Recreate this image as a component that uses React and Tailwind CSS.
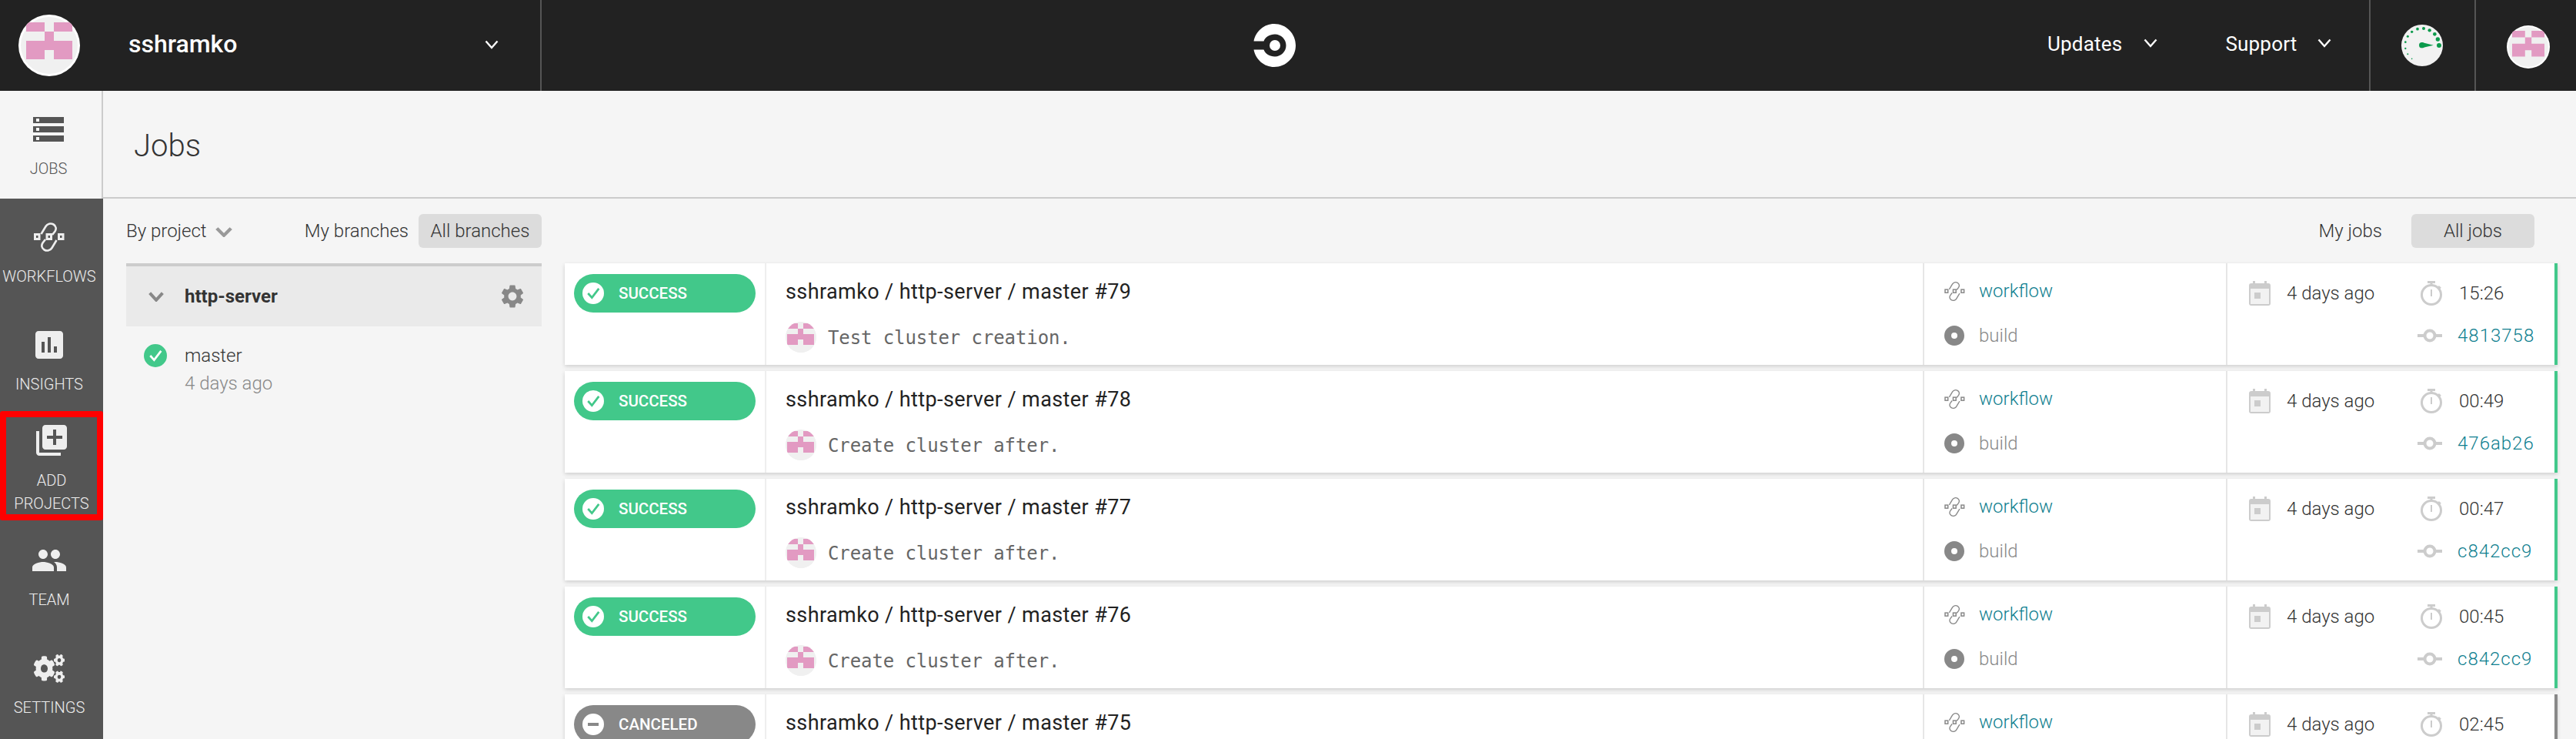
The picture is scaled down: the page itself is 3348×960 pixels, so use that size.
import { MdStorage, MdAssessment, MdLibraryAdd, MdPeople, MdSettings } from 'react-icons/md';
import { FaCogs } from 'react-icons/fa';

const jobs = [
  { n: 79, msg: 'Test cluster creation.', time: '15:26', sha: '4813758' },
  { n: 78, msg: 'Create cluster after.', time: '00:49', sha: '476ab26' },
  { n: 77, msg: 'Create cluster after.', time: '00:47', sha: 'c842cc9' },
  { n: 76, msg: 'Create cluster after.', time: '00:45', sha: 'c842cc9' },
  // only the top line of this row is on screen
  { n: 75, time: '02:45', canceled: true },
];

function Avatar({ className, ring }) {
  return (
    <svg viewBox="0 0 80 80" className={className}>
      <defs>
        <clipPath id="av">
          <circle cx="40" cy="40" r="40" />
        </clipPath>
      </defs>
      <g clipPath="url(#av)">
        <rect width="80" height="80" fill={ring ? '#fff' : '#f0f0f0'} />
        <circle cx="40" cy="40" r={ring ? 37 : 40} fill="#f0f0f0" />
        <path
          d="M10 10h24v12H10zM46 10h24v12H46zM34 22h12v12H34zM10 34h60v24H46V46H34v12H10z"
          fill="#e29ac2"
          transform={ring ? undefined : 'translate(-7.670 -7.670) scale(1.167)'}
        />
      </g>
    </svg>
  );
}

function Chevron({ className, stroke = '#fff', width = 2.4 }) {
  return (
    <svg viewBox="0 0 18 12" className={className} fill="none" stroke={stroke} strokeWidth={width} preserveAspectRatio="none">
      <path d="M1.500 1.500 9 10l7.500-8.500" />
    </svg>
  );
}

function WorkflowIcon({ className, color = '#eee', width = 2.6, box = 3 }) {
  return (
    <svg viewBox="0 0 40 38" className={className} fill="none" stroke={color} strokeWidth={width}>
      <path d="M9.500 15 15.500 5C17.500 1.500 22 .5 25.500 2.500 29 4.500 29.500 8.500 27.500 11.500L24 16" />
      <path d="M29.500 23 23.500 33C21.500 36.500 17 37.500 13.500 35.500 10 33.500 9.500 29.500 11.500 26.500L15 22" />
      <rect x="1.500" y="15.500" width="5.500" height="6" strokeWidth={box} />
      <rect x="17" y="15.500" width="5.500" height="6" strokeWidth={box} />
      <rect x="32.500" y="15.500" width="5.500" height="6" strokeWidth={box} />
    </svg>
  );
}

function Calendar() {
  return (
    <svg viewBox="0 0 28 32" className="w-[28px] h-[32px]">
      <path d="M5 0h3v3h12V0h3v3h2a3 3 0 0 1 3 3v23a3 3 0 0 1-3 3H3a3 3 0 0 1-3-3V6a3 3 0 0 1 3-3h2z" fill="#ccc" />
      <rect x="2" y="10" width="24" height="20" fill="#f2f2f2" />
      <rect x="7" y="15" width="8" height="8" fill="#ccc" />
    </svg>
  );
}

function Stopwatch() {
  return (
    <svg viewBox="0 0 28 32" className="w-[28px] h-[32px]" fill="none" stroke="#ccc">
      <circle cx="14" cy="18" r="12.500" strokeWidth="3" />
      <path d="M9 1.500h10" strokeWidth="3" />
      <path d="M14 3v3" strokeWidth="3" />
      <path d="M14 11v9" strokeWidth="2" />
      <path d="m23 7 3 2.500" strokeWidth="2.500" />
    </svg>
  );
}

function CommitIcon() {
  return (
    <svg viewBox="0 0 32 18" className="w-[32px] h-[18px]" fill="none" stroke="#ccc" strokeWidth="4">
      <circle cx="16" cy="9" r="6.500" />
      <path d="M0 9h9M23 9h9" />
    </svg>
  );
}

const gaugeDots = [
  [210, 114, 9], [205, 90, 8], [193, 70, 7], [173, 55, 6.5], [150, 48, 6], [126, 50, 5.5],
  [104, 61, 5], [88, 79, 4.5], [79, 101, 4], [79, 126, 3.5], [88, 148, 3], [104, 166, 2.5],
];

function Gauge() {
  return (
    <svg viewBox="63 33 162 162" className="w-[54px] h-[54px]">
      <circle cx="144" cy="114" r="81" fill="#f2f2f2" />
      {gaugeDots.map(([x, y, r]) => (
        <circle key={`${x}-${y}`} cx={x} cy={y} r={r} fill="#0c9a4c" />
      ))}
      <circle cx="143" cy="113" r="11" fill="#0c9a4c" />
      <path d="M143 102 188 113 143 124z" fill="#0c9a4c" />
    </svg>
  );
}

function NavItem({ icon, label }) {
  return (
    <div className="h-[140px] flex flex-col items-center pt-[30px] pr-[6px] text-[#eee]">
      <div className="h-[40px] flex items-center justify-center">{icon}</div>
      <span className="mt-[19px] text-[20px] leading-[24px] font-light whitespace-nowrap">{label}</span>
    </div>
  );
}

function Sidebar() {
  return (
    <div className="w-[134px] shrink-0 bg-[#555] flex flex-col">
      <div className="h-[140px] bg-[#f5f5f5] border-r-2 border-[#ccc] flex flex-col items-center pt-[30px] pr-[6px] text-[#555]">
        <div className="h-[40px] flex items-center justify-center">
          <MdStorage size={48} color="#555" />
        </div>
        <span className="mt-[19px] text-[20px] leading-[24px] font-light">JOBS</span>
      </div>
      <NavItem icon={<WorkflowIcon className="w-[40px] h-[38px]" />} label="WORKFLOWS" />
      <NavItem icon={<MdAssessment size={48} />} label="INSIGHTS" />
      <div className="h-[142px] -mt-[4px] mb-[2px] border-[8px] border-[#f00] rounded-[3px] flex flex-col items-center pt-[8px] text-[#eee]">
        <div className="h-[44px] flex items-center justify-center">
          <MdLibraryAdd size={48} />
        </div>
        <span className="mt-[15px] text-[20px] leading-[30px] font-light">ADD</span>
        <span className="text-[20px] leading-[30px] font-light">PROJECTS</span>
      </div>
      <NavItem icon={<MdPeople size={48} />} label="TEAM" />
      <NavItem icon={<FaCogs preserveAspectRatio="none" className="w-[40px] h-[37px]" />} label="SETTINGS" />
    </div>
  );
}

function TopBar() {
  return (
    <div className="h-[118px] shrink-0 bg-[#222] flex items-center text-white">
      <div className="w-[704px] h-full shrink-0 border-r-2 border-[#555] flex items-center pl-[24px]">
        <Avatar ring className="w-[80px] h-[80px]" />
        <span className="ml-[63px] -mt-[4px] text-[32px] font-medium">sshramko</span>
        <Chevron className="w-[18px] h-[12px] ml-[322px] -mt-[2px]" />
      </div>
      <div className="flex-1 h-full flex items-center">
        <svg viewBox="0 0 56 56" className="w-[56px] h-[56px] ml-[924px]">
          <circle cx="29" cy="28" r="7" fill="#fff" />
          <path d="M1.500 22.500C4 9.500 15 0 28 0c15.500 0 28 12.500 28 28S43.500 56 28 56C15 56 4 46.500 1.500 33.500h13C16.500 39 22 42.500 29 42.500c8 0 14.500-6.500 14.500-14.500S37 13.500 29 13.500C22 13.500 16.500 17 14.500 22.500z" fill="#fff" />
        </svg>
        <span className="ml-[977px] -mt-[3px] text-[26px] tracking-[0.2px]">Updates</span>
        <Chevron className="w-[18px] h-[12px] ml-[28px] -mt-[6px]" />
        <span className="ml-[88px] -mt-[3px] text-[26px] tracking-[0.2px]">Support</span>
        <Chevron className="w-[18px] h-[12px] ml-[26px] -mt-[6px]" />
      </div>
      <div className="w-[137px] h-full shrink-0 border-l-2 border-[#555] flex items-center justify-center pr-[2px] -ml-[1px]">
        <Gauge />
      </div>
      <div className="w-[132px] h-full shrink-0 border-l-2 border-[#555] pl-[40px] flex items-center">
        <Avatar ring className="w-[56px] h-[56px] mt-[4px]" />
      </div>
    </div>
  );
}

function JobRow({ job }) {
  const canceled = job.canceled;
  return (
    <div className={`h-[132px] shrink-0 flex bg-white border-r-4 shadow-[0_2px_5px_rgba(0,0,0,0.16)] ${canceled ? 'border-[#888]' : 'border-[#42c88a]'}`}>
      <div className="w-[262px] shrink-0 border-r-2 border-[#eee] pl-[12px] pt-[14px]">
        <div className={`w-[236px] h-[50px] rounded-full flex items-center pl-[11px] ${canceled ? 'bg-[#888]' : 'bg-[#42c88a]'}`}>
          <span className="w-[28px] h-[28px] rounded-full bg-white flex items-center justify-center">
            {canceled ? (
              <span className="w-[14px] h-[4px] bg-[#888]" />
            ) : (
              <svg viewBox="0 0 16 14" className="w-[18px] h-[16px]" fill="none" stroke="#42c88a" strokeWidth="2.400">
                <path d="m2 7 4.500 5L14.500 1.500" />
              </svg>
            )}
          </span>
          <span className="ml-[19px] text-[20.500px] font-medium text-white">{canceled ? 'CANCELED' : 'SUCCESS'}</span>
        </div>
      </div>
      <div className="w-[1503px] shrink-0 pl-[25px] pt-[20px]">
        <div className="h-[34px] flex items-center text-[27px] tracking-[0.4px] text-[#222] whitespace-nowrap">sshramko / http-server / master #{job.n}</div>
        {job.msg && (
          <div className="mt-[22px] h-[40px] flex items-center">
            <Avatar className="w-[40px] h-[40px]" />
            <span className="ml-[15px] mt-[2px] text-[24px] text-[#666] font-['DejaVu_Sans_Mono',monospace] tracking-[-0.1px]">{job.msg}</span>
          </div>
        )}
      </div>
      <div className="w-[396px] shrink-0 border-l-2 border-r-2 border-[#e6e6e6] pl-[26px] pt-[21px]">
        <div className="h-[30px] flex items-center">
          <WorkflowIcon className="w-[27px] h-[27px]" color="#888" width={2} box={2.200} />
          <span className="ml-[18px] -mt-[1px] text-[24px] font-light text-[#0f7f90]">workflow</span>
        </div>
        {!canceled && (
          <div className="mt-[28px] h-[30px] flex items-center">
            <span className="w-[26px] h-[26px] rounded-full border-[9px] border-[#888] bg-white" />
            <span className="ml-[19px] -mt-[1px] text-[24px] font-light text-[#888]">build</span>
          </div>
        )}
      </div>
      <div className="flex-1 pt-[23px] pl-[28px] flex">
        <div className="w-[219px] shrink-0 flex items-start">
          <Calendar />
          <span className="ml-[21px] text-[24px] leading-[32px] font-light text-[#333] whitespace-nowrap">4 days ago</span>
        </div>
        <div className="flex-1">
          <div className="flex items-center pl-[4px] h-[32px]">
            <Stopwatch />
            <span className="ml-[22px] text-[24px] font-light text-[#333]">{job.time}</span>
          </div>
          {job.sha && (
            <div className="flex items-center mt-[23px] h-[32px]">
              <CommitIcon />
              <span className="ml-[20px] text-[24px] font-light tracking-[1px] text-[#0f7f90]">{job.sha}</span>
            </div>
          )}
        </div>
      </div>
    </div>
  );
}

export default function App() {
  return (
    <div className="w-[3348px] h-[960px] overflow-hidden flex flex-col bg-[#f5f5f5] font-['Roboto',sans-serif]">
      <TopBar />
      <div className="flex-1 flex min-h-0">
        <Sidebar />
        <div className="flex-1 flex flex-col min-w-0">
          <div className="h-[140px] shrink-0 border-b-2 border-[#ccc] flex items-center pl-[40px] pt-[6px]">
            <h1 className="text-[40px] font-light text-[#333]">Jobs</h1>
          </div>
          <div className="flex-1 flex pl-[30px] pr-[24px] gap-[30px] min-h-0">
            <div className="w-[540px] shrink-0 pt-[20px]">
              <div className="h-[44px] flex items-center text-[24px] font-light text-[#333]">
                <span>By project</span>
                <Chevron className="w-[22px] h-[13px] ml-[11px] mt-[3px]" stroke="#999" width={3.600} />
                <span className="ml-[auto]">My branches</span>
                <span className="ml-[13px] w-[160px] h-[44px] rounded-[6px] bg-[#dcdcdc] flex items-center justify-center">All branches</span>
              </div>
              <div className="mt-[20px] h-[82px] border-t-4 border-[#ccc] bg-[#eaeaea] flex items-center pl-[29px] pr-[20px]">
                <Chevron className="w-[20px] h-[13px]" stroke="#888" width={3.600} />
                <span className="ml-[27px] text-[24px] font-bold text-[#333]">http-server</span>
                <MdSettings size={36} color="#888" className="ml-auto" />
              </div>
              <div className="mt-[23px] flex pl-[23px]">
                <span className="w-[30px] h-[30px] rounded-full bg-[#42c88a] flex items-center justify-center">
                  <svg viewBox="0 0 16 14" className="w-[18px] h-[16px]" fill="none" stroke="#fff" strokeWidth="2.400">
                    <path d="m2 7 4.500 5L14.500 1.500" />
                  </svg>
                </span>
                <div className="ml-[23px] text-[24px] font-light">
                  <div className="leading-[30px] text-[#333]">master</div>
                  <div className="mt-[6px] leading-[30px] text-[#888]">4 days ago</div>
                </div>
              </div>
            </div>
            <div className="flex-1 min-w-0 pt-[20px]">
              <div className="h-[44px] flex items-center justify-end pr-[30px] text-[24px] font-light text-[#333]">
                <span>My jobs</span>
                <span className="ml-[38px] w-[160px] h-[44px] rounded-[6px] bg-[#dcdcdc] flex items-center justify-center">All jobs</span>
              </div>
              <div className="mt-[20px] flex flex-col gap-[8px]">
                {jobs.map((j) => (
                  <JobRow key={j.n} job={j} />
                ))}
              </div>
            </div>
          </div>
        </div>
      </div>
    </div>
  );
}
